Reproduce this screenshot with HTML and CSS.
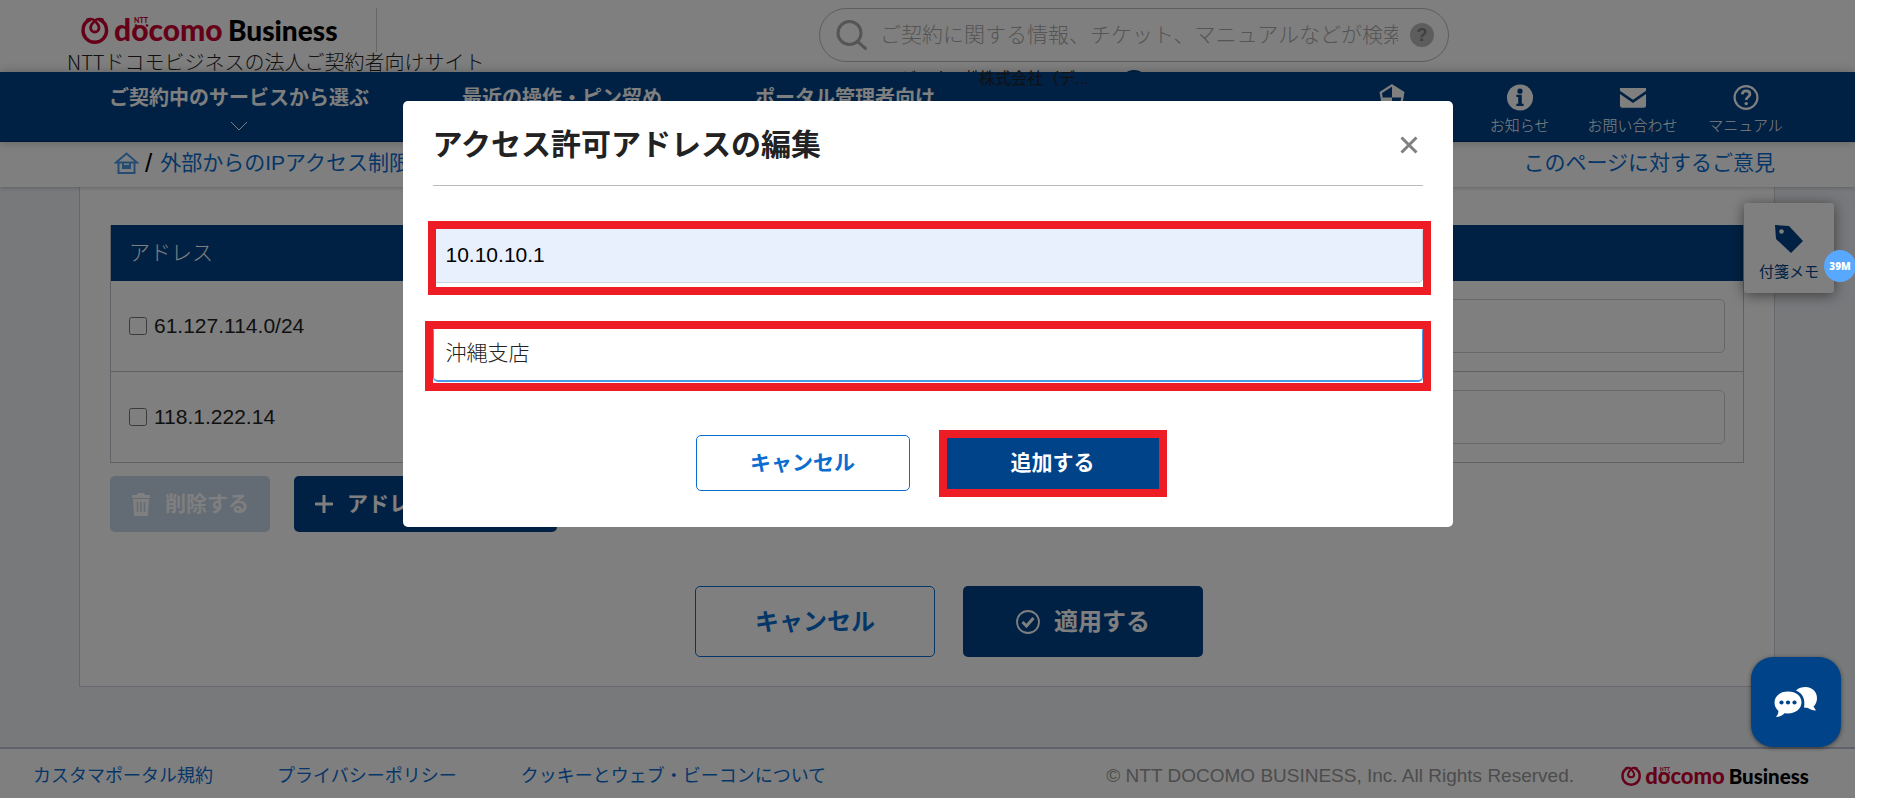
FILE: index.html
```html
<!DOCTYPE html>
<html lang="ja">
<head>
<meta charset="UTF-8">
<meta name="viewport" content="width=device-width, initial-scale=1.0">
<title>外部からのIPアクセス制限 | docomo Business</title>
<link rel="stylesheet" href="styles.css">
</head>
<body>

<svg class="defs" aria-hidden="true">
  <symbol id="logo" class="logo-symbol" viewBox="0 0 258 28">
    <g fill="none" stroke="#cc0033" stroke-linecap="round">
      <path d="M9 2.6C4.500 4.500 2 9 2 13.500a11.800 11.800 0 0 0 23.600 0C25.600 8.500 23 4.500 18.600 2.600" stroke-width="3.400"/>
      <path d="M6.500 2.600C9.500 1.600 12 2 13.800 3.600C15.600 2 18.500 1.600 21.500 2.600" stroke-width="2.600"/>
      <path d="M13.800 4C11 6.500 9.600 8.500 9.600 10.800a4.200 4.200 0 0 0 8.400 0C18 8.500 16.600 6.500 13.800 4z" stroke-width="2.800"/>
    </g>
    <text class="logo-red" x="33" y="24">docomo</text>
    <text class="logo-ntt" x="53" y="6">NTT</text>
    <circle cx="55" cy="8.500" r="1.300" fill="#cc0033"/>
    <circle cx="66" cy="8.500" r="1.300" fill="#cc0033"/>
    <text class="logo-black" x="147" y="24">Business</text>
  </symbol>
</svg>

<div class="page">
  <header class="header">
    <div class="brand">
      <a href="#" class="brand-link" aria-label="docomo Business"><svg class="logo"><use href="#logo"/></svg></a>
      <p class="tagline">NTTドコモビジネスの法人ご契約者向けサイト</p>
    </div>
    <form class="search">
      <svg class="search-icon" viewBox="0 0 32 32" fill="none" stroke="#aaa" stroke-width="3" stroke-linecap="round"><circle cx="13.500" cy="14" r="11.500"/><path d="M21.500 22.500l8 7"/></svg>
      <input type="text" class="search-input" aria-label="検索" placeholder="ご契約に関する情報、チケット、マニュアルなどが検索できます">
      <button type="button" class="search-help" aria-label="ヘルプ">?</button>
    </form>
    <div class="account">NTTドコモビジネス株</div>
    <div class="account-dot"></div>
  </header>

  <nav class="nav">
    <a href="#" class="nav-link">ご契約中のサービスから選ぶ
      <svg class="chevron" viewBox="0 0 18 10" fill="none" stroke="#fff"><path d="M1 1l8 8 8-8"/></svg>
    </a>
    <a href="#" class="nav-link">最近の操作・ピン留め</a>
    <a href="#" class="nav-link">ポータル管理者向け</a>
    <div class="tools">
      <a href="#" class="tool tool-wide">
        <svg class="tool-icon" viewBox="0 0 30 30"><path d="M15 1.500L27.500 9.500 25 24H5L2.500 9.500z" fill="none" stroke="#fff" stroke-width="2.500"/><path d="M15 1.500L27.500 9.500V15H15zM5 15h10v9H5z" fill="#fff"/></svg>
        ダッシュボード
      </a>
      <a href="#" class="tool">
        <svg class="tool-icon" viewBox="0 0 30 30"><circle cx="15" cy="15" r="14.500" fill="#fff"/><circle cx="15" cy="8" r="2.900" fill="#004388"/><path d="M11 12h6v10h2v2.500h-8V22h2v-7.500h-2z" fill="#004388"/></svg>
        お知らせ
      </a>
      <a href="#" class="tool">
        <svg class="tool-icon" viewBox="0 0 30 30"><path d="M.5 4.500h29v3L15 17.500.5 7.500zM.5 11L15 21l14.500-10v13a2.500 2.500 0 0 1-2.500 2.500H3A2.500 2.500 0 0 1 .5 24z" fill="#fff"/></svg>
        お問い合わせ
      </a>
      <a href="#" class="tool">
        <svg class="tool-icon" viewBox="0 0 30 30" fill="none" stroke="#fff"><circle cx="15" cy="15" r="12.700" stroke-width="2.400"/><path d="M10.800 11.500c.3-2.600 2-3.800 4.300-3.800 2.600 0 4.300 1.500 4.300 3.600 0 3.200-4.200 3.200-4.200 6.500" stroke-width="3"/><circle cx="15.200" cy="21.800" r="1.900" fill="#fff" stroke="none"/></svg>
        マニュアル
      </a>
    </div>
  </nav>
  <div class="account-over">株式会社（デ...</div>

  <div class="crumbs">
    <a href="#" aria-label="ホーム"><svg class="home" viewBox="0 0 24 22" fill="none" stroke="#4a9ae8" stroke-width="2"><path d="M1.500 10.500L12 1.500l10.500 9zM4 10.500V21h16V10.500M8.500 11v5h7v-5M9 14h6"/></svg></a>
    <span class="slash">/</span>
    <a href="#">外部からのIPアクセス制限</a>
    <a href="#" class="feedback">このページに対するご意見</a>
  </div>

  <main class="main">
    <div class="panel">
      <table class="addresses">
        <thead>
          <tr><th>アドレス</th><th></th></tr>
        </thead>
        <tbody>
          <tr>
            <td><label class="check"><input type="checkbox">61.127.114.0/24</label></td>
            <td><input type="text" class="memo" aria-label="61.127.114.0/24 の備考"></td>
          </tr>
          <tr>
            <td><label class="check"><input type="checkbox">118.1.222.14</label></td>
            <td><input type="text" class="memo" aria-label="118.1.222.14 の備考"></td>
          </tr>
        </tbody>
      </table>
      <div class="row-actions">
        <button class="btn btn-disabled" disabled>
          <svg class="trash" viewBox="0 0 20 24"><path d="M7 1h6l1 2h5v3H1V3h5z" fill="#fff"/><path d="M2 7h16l-1 17H3z" fill="#fff"/><path d="M6.500 10v10M10 10v10M13.500 10v10" stroke="#c6d6ea" stroke-width="1.500"/></svg>
          削除する
        </button>
        <button class="btn btn-primary">
          <svg class="plus" viewBox="0 0 18 18" stroke="#fff" stroke-width="3"><path d="M9 0v18M0 9h18"/></svg>
          アドレスを追加する
        </button>
      </div>
      <div class="page-actions">
        <button class="btn btn-large btn-outline">キャンセル</button>
        <button class="btn btn-large btn-primary">
          <svg class="apply" viewBox="0 0 24 24" fill="none" stroke="#fff"><circle cx="12" cy="12" r="11" stroke-width="1.800"/><path d="M6.500 12l4 4 7-8" stroke-width="3"/></svg>
          適用する
        </button>
      </div>
    </div>
  </main>

  <footer class="footer">
    <a href="#">カスタマポータル規約</a>
    <a href="#">プライバシーポリシー</a>
    <a href="#">クッキーとウェブ・ビーコンについて</a>
    <small class="copyright">© NTT DOCOMO BUSINESS, Inc. All Rights Reserved.</small>
    <svg class="logo logo-small" role="img" aria-label="docomo Business"><use href="#logo"/></svg>
  </footer>

  <button class="note">
    <svg class="tag" viewBox="0 0 30 30"><path d="M1 1l14 1 14 15-12 12L2 15z" fill="#004388"/><circle cx="7.500" cy="7.500" r="2.300" fill="#fff"/></svg>
    付箋メモ
  </button>

  <div class="overlay">
    <div class="modal" role="dialog" aria-labelledby="modal-title">
      <div class="modal-header">
        <h2 id="modal-title">アクセス許可アドレスの編集</h2>
        <button class="close" aria-label="閉じる"><svg viewBox="0 0 18 18" stroke="#808080" stroke-width="3"><path d="M1.500 1.500l15 15M16.500 1.500l-15 15"/></svg></button>
      </div>
      <form class="modal-form">
        <div class="field marked marked-address">
          <input type="text" class="field-input filled" aria-label="アドレス" value="10.10.10.1">
        </div>
        <div class="field marked marked-memo">
          <input type="text" class="field-input active" aria-label="備考" value="沖縄支店">
        </div>
        <div class="modal-actions">
          <button type="button" class="btn btn-outline">キャンセル</button>
          <div class="marked marked-button"><button type="button" class="btn btn-primary">追加する</button></div>
        </div>
      </form>
    </div>
  </div>

  <div class="badge">39M</div>
  <button class="chat" aria-label="チャット">
    <svg viewBox="0 0 44 32" fill="#fff"><path d="M22 4.500C24.500 1.500 28 1 31.500 1 38.500 1 43 6 43 12c0 4-1.500 6.500-3.500 8.500l2.500 4c-3.500 0-6-1-8-2.500l-4-.5c1.500-8-1-14-8-17z"/><path d="M14 5.500c8 0 13.500 4.500 13.500 10.800S22 27.500 14 27.500l-3.500-.2C8.500 29.500 5.500 31 2 31c1.200-1.500 2.300-3.500 2.500-6C2 23 .500 20 .500 16.500.500 10 6 5.500 14 5.500z"/><g fill="#004388"><circle cx="7.500" cy="16.500" r="2.100"/><circle cx="14" cy="16.500" r="2.100"/><circle cx="20.500" cy="16.500" r="2.100"/></g></svg>
  </button>
</div>

</body>
</html>
```
FILE: styles.css
```css
* {
  box-sizing: border-box;
}

body {
  margin: 0;
  background: #fff;
  color: #222;
  font-family: 'Liberation Sans', 'Noto Sans CJK JP', sans-serif;
  font-size: 21px;
  font-weight: 400;
  line-height: 30px;
}

button, input {
  font: inherit;
  color: inherit;
}

a {
  color: #0b6dd0;
  text-decoration: none;
}

.defs {
  display: block;
  width: 0;
  height: 0;
}

.page {
  position: relative;
  margin-right: 28px;
  overflow: hidden;
}

/* header */
.header {
  position: relative;
  display: flex;
  height: 72px;
  padding: 8px 406px 0 67px;
  justify-content: space-between;
  align-items: flex-start;
}

.brand-link {
  display: block;
  width: 310px;
  height: 44px;
  padding: 9px 0 0 14px;
  border-right: 1px solid #ccc;
}

.logo {
  display: block;
  width: 258px;
  height: 28px;
  overflow: visible;
}

.logo-symbol {
  overflow: visible;
}

.logo-red, .logo-black, .logo-ntt {
  font-family: Lato, sans-serif;
  font-weight: 900;
  font-size: 30px;
  fill: #cc0033;
}

.logo-black {
  font-size: 28px;
  fill: #000;
}

.logo-ntt {
  font-size: 7px;
}

.tagline {
  margin: 0;
  font-family: 'Noto Sans CJK JP', sans-serif;
  font-size: 20px;
  font-weight: 300;
  line-height: 20px;
  white-space: nowrap;
}

.search {
  display: flex;
  align-items: center;
  width: 630px;
  height: 54px;
  padding: 0 14px 0 16px;
  border: 1px solid #bbb;
  border-radius: 27px;
}

.search-icon {
  width: 32px;
  height: 32px;
}

.search-input {
  flex: 1;
  min-width: 0;
  margin: 0 12px;
  padding: 0;
  border: 0;
  background: none;
  font-weight: 300;
  outline: none;
}

.search-input::placeholder {
  color: #aaa;
  opacity: 1;
}

.search-help {
  width: 24px;
  height: 24px;
  padding: 0;
  border: 0;
  border-radius: 50%;
  background: #bbb;
  color: #808080;
  font-size: 18px;
  font-weight: bold;
  line-height: 24px;
}

.account, .account-over {
  position: absolute;
  left: 822px;
  top: 67px;
  font-size: 16px;
  line-height: 24px;
}

.account-over {
  left: 979px;
  z-index: 2;
}

.account-dot {
  position: absolute;
  left: 1120px;
  top: 70px;
  width: 28px;
  height: 28px;
  border-radius: 50%;
  background: #004388;
}

/* navigation */
.nav {
  position: relative;
  z-index: 1;
  display: flex;
  gap: 93px;
  height: 70px;
  padding: 11px 53px 0 109px;
  border-bottom: 1px solid #00306a;
  background: #004388;
  box-shadow: 0 0 10px rgba(0,0,0,0.25);
}

.nav-link {
  display: flex;
  flex-direction: column;
  align-items: center;
  color: #fff;
  font-size: 20px;
  font-weight: bold;
  white-space: nowrap;
}

.chevron {
  width: 18px;
  height: 10px;
  margin-top: 8px;
}

.tools {
  display: flex;
  margin-left: auto;
}

.tool {
  display: flex;
  flex-direction: column;
  align-items: center;
  width: 113px;
  color: #fff;
  font-size: 15px;
  font-weight: 300;
  line-height: 30px;
  white-space: nowrap;
}

.tool-wide {
  width: 143px;
}

.tool-icon {
  width: 30px;
  height: 30px;
  margin-top: 1px;
}

.crumbs {
  position: relative;
  display: flex;
  align-items: center;
  height: 45px;
  padding: 0 80px 4px 114px;
  box-shadow: 0 1px 4px rgba(0,0,0,0.2);
}

.home {
  display: block;
  width: 25px;
  height: 22px;
}

.slash {
  margin: 0 8px 0 6px;
  color: #000;
  font-size: 26px;
}

.feedback {
  margin-left: auto;
}

/* content */
.main {
  padding: 0 80px 60px 79px;
  background: #eff2f7;
}

.panel {
  padding: 38px 30px 29px;
  border: 1px solid #cdd0da;
  border-top: 0;
  background: #fff;
}

.addresses {
  width: 100%;
  border: 1px solid #bfc3cc;
  border-top: 0;
  border-collapse: separate;
  border-spacing: 0;
  table-layout: fixed;
}

.addresses th {
  height: 56px;
  padding: 0 18px;
  background: #004388;
  color: #fff;
  font-weight: 300;
  text-align: left;
}

.addresses td {
  height: 91px;
  padding: 0 18px;
  border-bottom: 1px solid #bfc3cc;
}

.addresses tr:last-child td {
  height: 90px;
  border-bottom: 0;
}

.check {
  display: flex;
  align-items: center;
  gap: 7px;
}

.check input {
  width: 18px;
  height: 18px;
  margin: 0;
}

.memo {
  display: block;
  width: 100%;
  height: 54px;
  border: 1px solid #cdd0d6;
  border-radius: 5px;
  background: #fff;
}

.btn {
  display: flex;
  align-items: center;
  justify-content: center;
  gap: 14px;
  height: 56px;
  padding: 0 21px;
  border: 0;
  border-radius: 5px;
  font-weight: bold;
  white-space: nowrap;
}

.btn-primary {
  background: #004388;
  color: #fff;
}

.btn-outline {
  border: 1px solid #0b6dd0;
  background: #fff;
  color: #0b6dd0;
}

.btn-disabled {
  background: #c6d6ea;
  color: #fff;
}

.btn-large {
  width: 240px;
  height: 71px;
  font-size: 24px;
}

.row-actions {
  display: flex;
  gap: 24px;
  margin-top: 13px;
}

.trash {
  width: 20px;
  height: 24px;
}

.plus {
  width: 18px;
  height: 18px;
}

.apply {
  width: 24px;
  height: 24px;
}

.page-actions {
  display: flex;
  justify-content: center;
  gap: 28px;
  margin-top: 54px;
  padding-left: 44px;
}

/* footer */
.footer {
  display: flex;
  align-items: center;
  gap: 64px;
  height: 51px;
  padding: 5px 45px 0 33px;
  border-top: 2px solid #bfc5d0;
  font-size: 18px;
  white-space: nowrap;
}

.copyright {
  margin-left: auto;
  margin-right: -17px;
  color: #999;
  font-size: 19px;
}

.logo-small {
  width: 189px;
  height: 21px;
}

.note {
  position: absolute;
  right: 21px;
  top: 203px;
  display: flex;
  flex-direction: column;
  align-items: center;
  width: 90px;
  height: 90px;
  padding: 21px 0 0;
  border: 0;
  border-radius: 3px;
  background: #fff;
  box-shadow: 0 2px 14px rgba(0,0,0,0.5);
  color: #004388;
  font-size: 15px;
}

.tag {
  width: 30px;
  height: 30px;
  margin-bottom: 3px;
}

/* modal */
.overlay {
  position: absolute;
  inset: 0;
  z-index: 3;
  padding-top: 101px;
  background: rgba(0,0,0,0.5);
}

.modal {
  width: 1050px;
  margin: 0 auto;
  padding: 0 30px 36px;
  border-radius: 5px;
  background: #fff;
}

.modal-header {
  display: flex;
  align-items: center;
  justify-content: space-between;
  height: 85px;
  padding: 3px 5px 0 0;
  border-bottom: 1px solid #bbb;
}

.modal-header h2 {
  margin: 0;
  font-size: 30px;
}

.close {
  width: 18px;
  height: 18px;
  padding: 0;
  border: 0;
  background: none;
}

.close svg {
  display: block;
}

.modal-form {
  display: flex;
  flex-direction: column;
  gap: 43px;
  padding-top: 41px;
}

.field-input {
  display: block;
  width: 100%;
  height: 56px;
  padding: 0 12px;
  border: 1px solid #c8d2dc;
  border-radius: 5px;
  outline: none;
}

.filled {
  background: #e8effd;
  color: #000;
}

.active {
  padding-bottom: 6px;
  border-color: #4a9ae8;
  border-bottom-width: 2px;
  font-weight: 300;
}

.modal-actions {
  display: flex;
  justify-content: center;
  gap: 36px;
  padding-top: 10px;
}

.modal-actions .btn {
  width: 214px;
}

/* red frame drawn over the marked controls */
.marked {
  position: relative;
}

.marked::after {
  content: "";
  position: absolute;
  border: 8px solid #ee1c24;
  pointer-events: none;
}

.marked-address::after {
  inset: -6px -8px -12px -5px;
}

.marked-memo::after {
  inset: -5px -8px -9px;
}

.marked-button::after {
  inset: -5px -7px -6px;
}

.badge {
  position: absolute;
  right: -1px;
  top: 250px;
  z-index: 4;
  width: 32px;
  height: 32px;
  border-radius: 50%;
  background: #58a8ff;
  color: #fff;
  font-family: 'Noto Sans', sans-serif;
  font-size: 10px;
  font-weight: 900;
  line-height: 32px;
  text-align: center;
}

.chat {
  position: absolute;
  right: 14px;
  bottom: 51px;
  z-index: 4;
  width: 90px;
  height: 90px;
  padding: 0 23px;
  border: 0;
  border-radius: 22px;
  background: #004388;
  box-shadow: 0 1px 4px rgba(0,0,0,0.5);
}

.chat svg {
  display: block;
  width: 44px;
  height: 32px;
}
```
